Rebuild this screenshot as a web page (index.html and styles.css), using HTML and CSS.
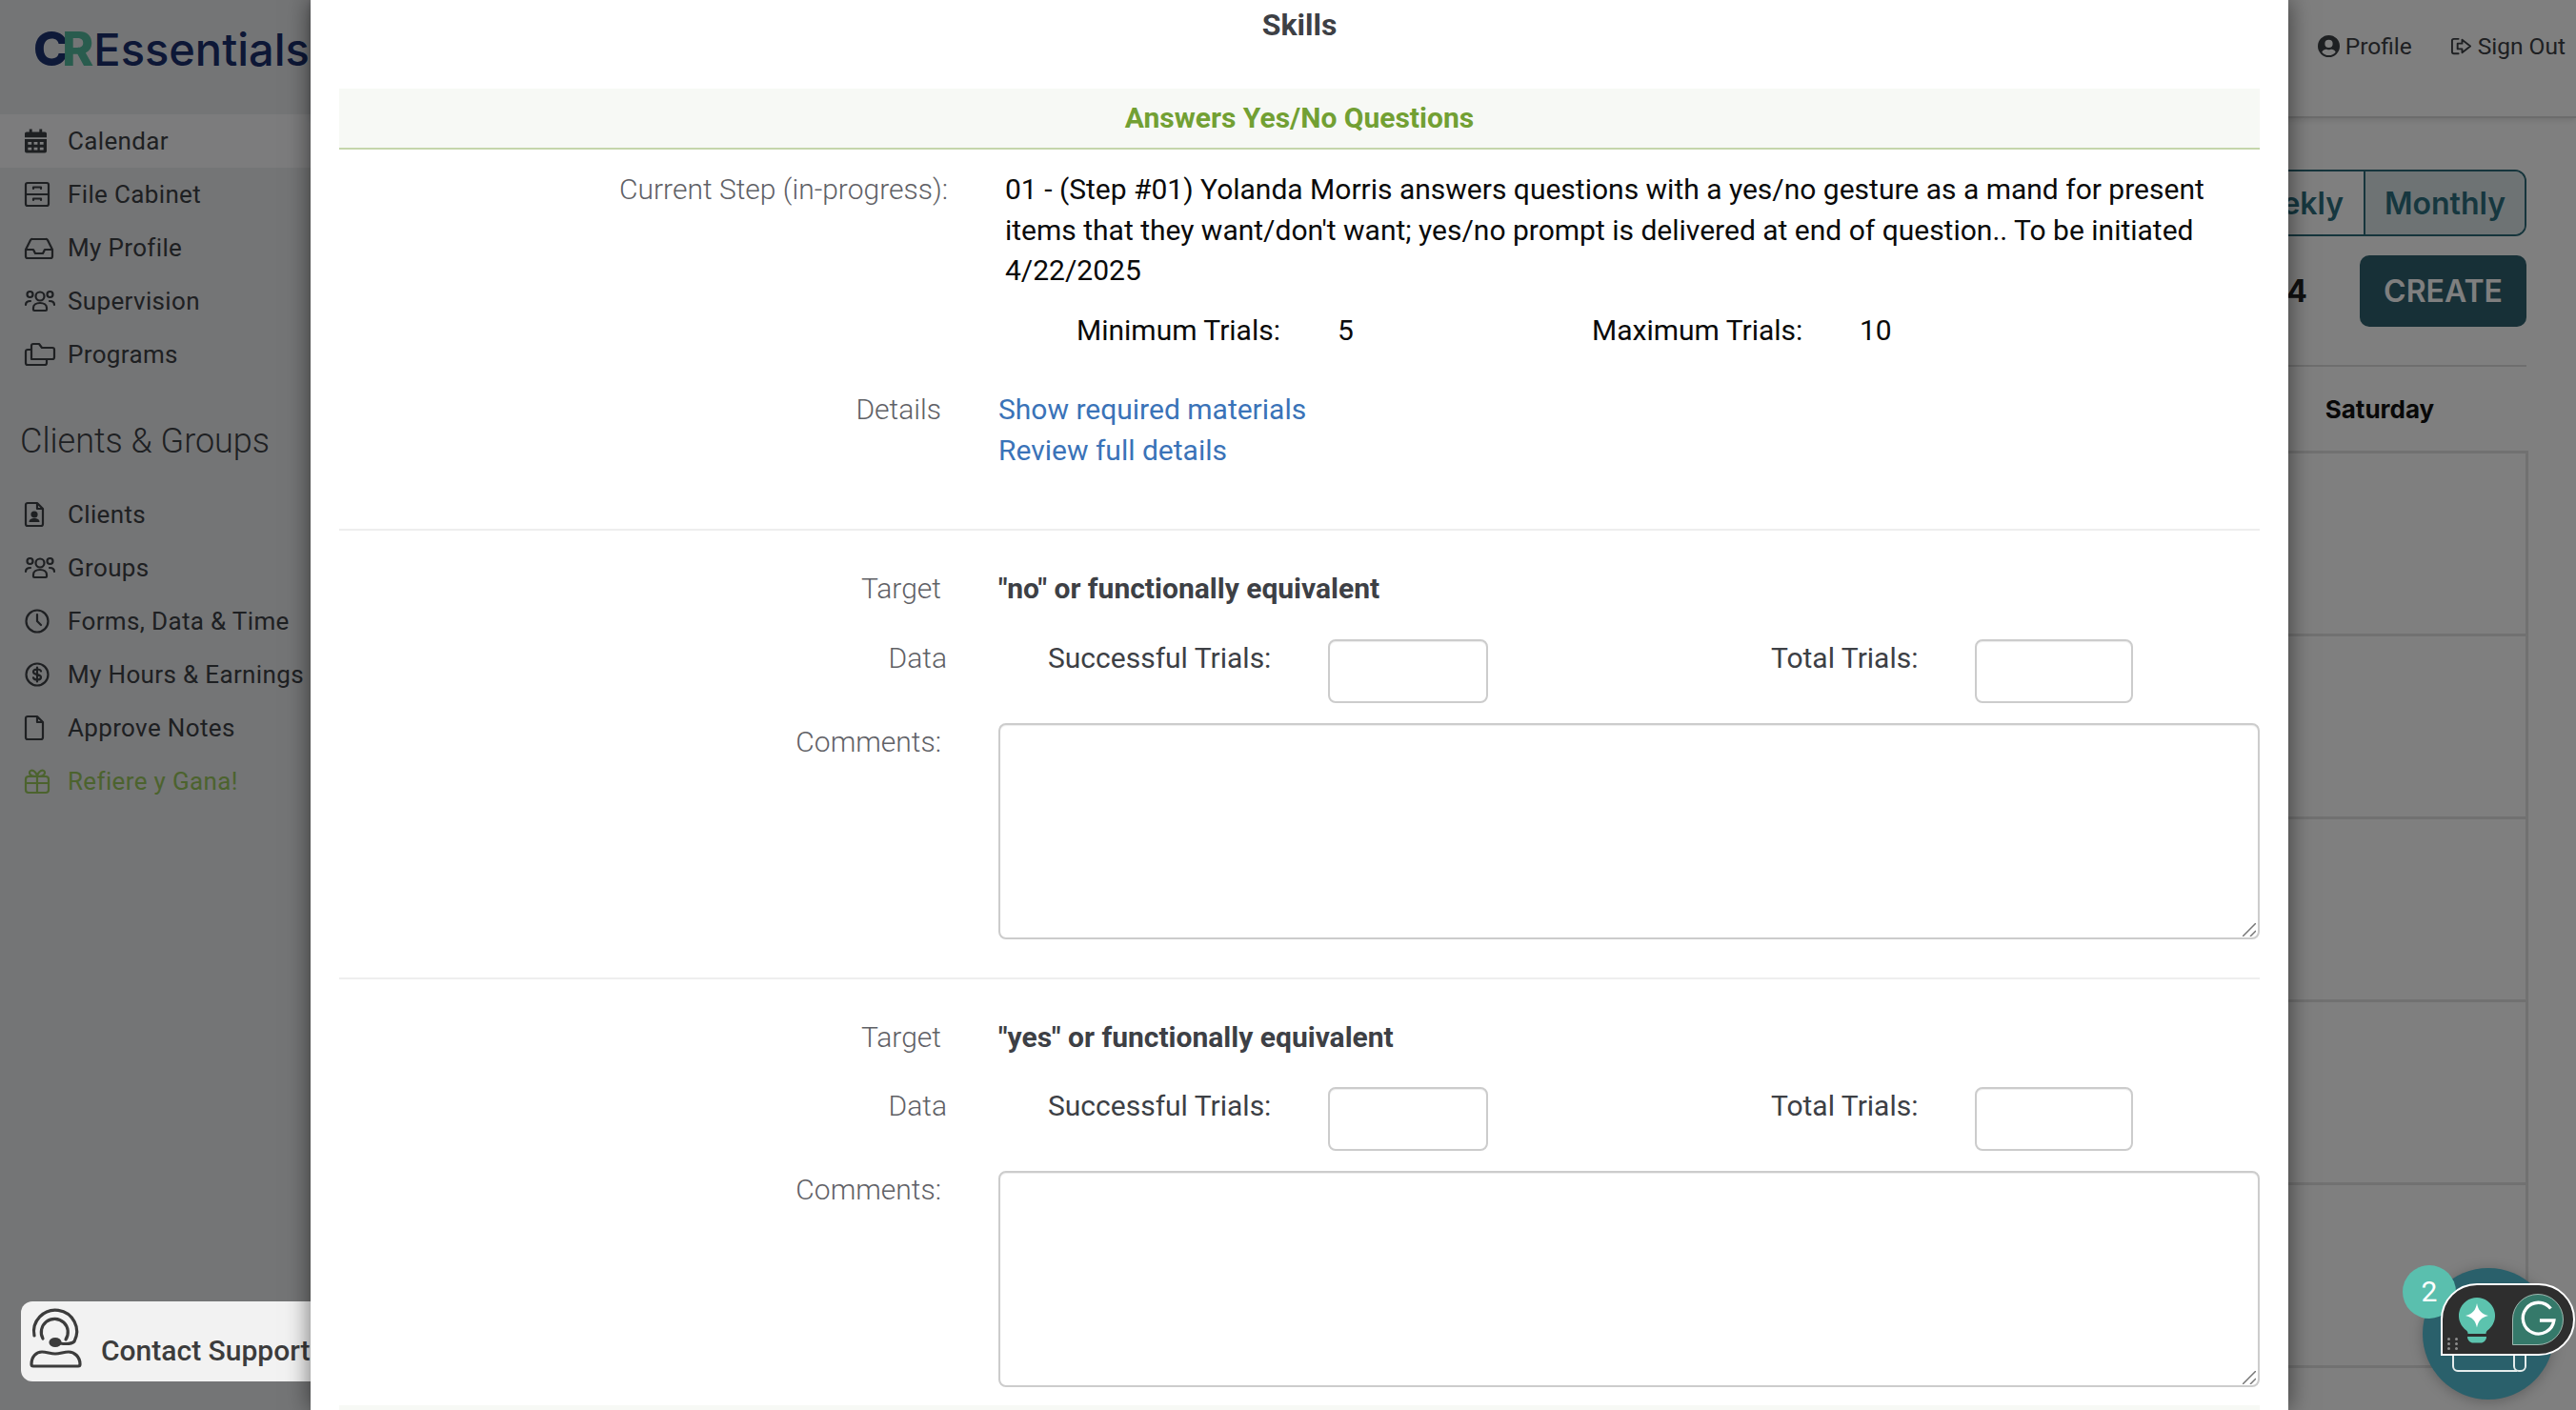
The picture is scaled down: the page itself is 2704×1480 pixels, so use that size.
FILE: index.html
```html
<!DOCTYPE html>
<html lang="en">
<head>
<meta charset="utf-8">
<title>CR Essentials - Skills</title>
<link rel="stylesheet" href="styles.css">
</head>
<body>
<div class="app">
  <aside class="sidebar">
    <div class="logo"><span class="logo-c">C</span><span class="logo-r">R</span><span class="logo-word">Essentials</span></div>
    <nav class="nav">
      <a class="nav-item active"><svg class="ico cal-ico" viewBox="0 0 24 26"><path fill="currentColor" stroke="none" d="M5 0h3v3h8V0h3v3h3a2 2 0 0 1 2 2v4H0V5a2 2 0 0 1 2-2h3zM0 11h24v13a2 2 0 0 1-2 2H2a2 2 0 0 1-2-2zm3.500 3v3h4v-3zm6.500 0v3h4v-3zm6.500 0v3h4v-3zM3.500 20v3h4v-3zm6.500 0v3h4v-3zm6.500 0v3h4v-3z"/></svg>Calendar</a>
      <a class="nav-item"><svg class="ico" viewBox="0 0 26 26"><rect x="1" y="1" width="24" height="24" rx="2"/><path d="M1 13h24M9 7V5.500h8V7M9 19v-1.500h8V19"/></svg>File Cabinet</a>
      <a class="nav-item"><svg class="ico wide" viewBox="0 0 30 26"><path d="M1 15 6 5a2 2 0 0 1 2-1h14a2 2 0 0 1 2 1l5 10v7a2 2 0 0 1-2 2H3a2 2 0 0 1-2-2zM1 15h8l2 4h8l2-4h8"/></svg>My Profile</a>
      <a class="nav-item"><svg class="ico wider" viewBox="0 0 32 26"><circle cx="16" cy="8" r="4.500"/><circle cx="5.500" cy="6" r="3"/><circle cx="26.500" cy="6" r="3"/><path d="M9 22v-2c0-3 3-5 7-5s7 2 7 5v2a1 1 0 0 1-1 1H10a1 1 0 0 1-1-1zM1 17c0-3 2-4 5-4M31 17c0-3-2-4-5-4"/></svg>Supervision</a>
      <a class="nav-item"><svg class="ico wider" viewBox="0 0 32 26"><path d="M7 18V4a2 2 0 0 1 2-2h6l3 4h11a2 2 0 0 1 2 2v8a2 2 0 0 1-2 2zM7 8H3a2 2 0 0 0-2 2v12a2 2 0 0 0 2 2h18a2 2 0 0 0 2-2v-4"/></svg>Programs</a>
    </nav>
    <h2 class="nav-heading">Clients &amp; Groups</h2>
    <nav class="nav">
      <a class="nav-item"><svg class="ico slim" viewBox="0 0 20 26"><path d="M3 1h10l6 6v16a2 2 0 0 1-2 2H3a2 2 0 0 1-2-2V3a2 2 0 0 1 2-2zM13 1v6h6"/><circle cx="10" cy="13" r="2.500" fill="currentColor"/><path fill="currentColor" stroke="none" d="M4.500 21c0-3 2.500-4 5.500-4s5.500 1 5.500 4z"/></svg>Clients</a>
      <a class="nav-item"><svg class="ico wider" viewBox="0 0 32 26"><circle cx="16" cy="8" r="4.500"/><circle cx="5.500" cy="6" r="3"/><circle cx="26.500" cy="6" r="3"/><path d="M9 22v-2c0-3 3-5 7-5s7 2 7 5v2a1 1 0 0 1-1 1H10a1 1 0 0 1-1-1zM1 17c0-3 2-4 5-4M31 17c0-3-2-4-5-4"/></svg>Groups</a>
      <a class="nav-item"><svg class="ico" viewBox="0 0 26 26"><circle cx="13" cy="13" r="11.500"/><path d="M13 6v7l4 4"/></svg>Forms, Data &amp; Time</a>
      <a class="nav-item"><svg class="ico" viewBox="0 0 26 26"><circle cx="13" cy="13" r="11.500"/><path d="M17 9.500c-.500-1.500-2-2-4-2-2.500 0-4 1-4 2.800 0 4 8 1.500 8 5.400 0 1.800-1.500 2.800-4 2.800-2 0-3.500-.700-4-2.200M13 5.500v15"/></svg>My Hours &amp; Earnings</a>
      <a class="nav-item"><svg class="ico slim" viewBox="0 0 20 26"><path d="M3 1h10l6 6v16a2 2 0 0 1-2 2H3a2 2 0 0 1-2-2V3a2 2 0 0 1 2-2zM13 1v6h6"/></svg>Approve Notes</a>
      <a class="nav-item promo"><svg class="ico" viewBox="0 0 26 26"><rect x="1" y="8" width="24" height="17" rx="3"/><path d="M1 15h24M13 8v17M13 8C9 8 5 7 5 4c0-2 2-3 4-2 2 1 4 4 4 6zm0 0c4 0 8-1 8-4 0-2-2-3-4-2-2 1-4 4-4 6z"/></svg>Refiere y Gana!</a>
    </nav>
  </aside>
  <div class="content">
    <header class="topbar">
      <a class="top-link"><svg class="top-ico" viewBox="0 0 24 24"><path fill="currentColor" fill-rule="evenodd" d="M12 0a12 12 0 1 1 0 24 12 12 0 0 1 0-24zm0 5a4.300 4.300 0 1 0 0 8.600A4.300 4.300 0 0 0 12 5zm0 17a9.700 9.700 0 0 0 7.500-3.500c-1-2-2.800-3-4.500-3-.9 0-1.700.5-3 .5s-2.100-.5-3-.5c-1.700 0-3.500 1-4.500 3A9.700 9.700 0 0 0 12 22z"/></svg>Profile</a>
      <a class="top-link"><svg class="top-ico line" viewBox="0 0 24 24"><path d="M9 4H4a2 2 0 0 0-2 2v12a2 2 0 0 0 2 2h5M13 5l9 7-9 7v-4H8V9h5z"/></svg>Sign Out</a>
    </header>
    <main class="main">
      <div class="toggle"><span class="toggle-btn">Weekly</span><span class="toggle-btn on">Monthly</span></div>
      <div class="title-row"><span class="period">2024</span><button class="create">CREATE</button></div>
      <div class="days">
        <span></span><span></span><span></span><span></span><span></span><span></span><span>Saturday</span>
      </div>
      <div class="cal">
        <div></div><div></div><div></div><div></div><div></div><div></div><div></div>
        <div></div><div></div><div></div><div></div><div></div><div></div><div></div>
        <div></div><div></div><div></div><div></div><div></div><div></div><div></div>
        <div></div><div></div><div></div><div></div><div></div><div></div><div></div>
        <div></div><div></div><div></div><div></div><div></div><div></div><div></div>
      </div>
    </main>
  </div>
</div>

<div class="backdrop"></div>

<a class="support">
  <svg class="support-ico" viewBox="0 0 54 62"><path d="M4 27A22.500 22.500 0 1 1 46 33C43 36 38 36 31 35"/><path d="M13 30A14 14 0 1 1 37 31"/><path d="M1 57C1 49 6 44 12 44c5 0 9 2 14 2s9-2 14-2c6 0 12 5 12 13a2 2 0 0 1-2 2H3a2 2 0 0 1-2-2z"/><ellipse cx="26" cy="34" rx="5" ry="3.500" fill="currentColor"/></svg>
  <span>Contact Support</span>
</a>

<section class="modal">
  <h1 class="modal-title">Skills</h1>
  <h2 class="band">Answers Yes/No Questions</h2>

  <div class="step">
    <div class="step-label">Current Step (in-progress):</div>
    <div class="step-text">01 - (Step #01) Yolanda Morris answers questions with a yes/no gesture as a mand for present items that they want/don't want; yes/no prompt is delivered at end of question.. To be initiated 4/22/2025</div>
  </div>
  <div class="limits">
    <span>Minimum Trials:</span><span>5</span><span>Maximum Trials:</span><span>10</span>
  </div>
  <div class="details">
    <div class="label">Details</div>
    <div class="links"><a>Show required materials</a><a>Review full details</a></div>
  </div>

  <div class="block">
    <div class="target"><div class="label">Target</div><div class="target-name">"no" or functionally equivalent</div></div>
    <div class="data">
      <div class="label">Data</div>
      <div class="trials">
        <label class="t-first">Successful Trials:</label><input class="num" type="text">
        <label class="t-second">Total Trials:</label><input class="num" type="text">
      </div>
    </div>
    <div class="comments"><div class="label">Comments:</div>
      <div class="ta"><textarea></textarea><svg class="grip" viewBox="0 0 14 14"><path d="M0 14 14 0M8 14l6-6"/></svg></div>
    </div>
  </div>

  <div class="block last">
    <div class="target"><div class="label">Target</div><div class="target-name">"yes" or functionally equivalent</div></div>
    <div class="data">
      <div class="label">Data</div>
      <div class="trials">
        <label class="t-first">Successful Trials:</label><input class="num" type="text">
        <label class="t-second">Total Trials:</label><input class="num" type="text">
      </div>
    </div>
    <div class="comments"><div class="label">Comments:</div>
      <div class="ta"><textarea></textarea><svg class="grip" viewBox="0 0 14 14"><path d="M0 14 14 0M8 14l6-6"/></svg></div>
    </div>
  </div>
  <div class="band band-next"></div>
</section>

<div class="widget">
  <div class="w-circle">
    <svg class="w-book" viewBox="0 0 80 30"><path d="M2 0v22a5 5 0 0 0 5 5h62M68 0h-2v22a5 5 0 0 0 5 5h2a5 5 0 0 0 5-5V0M11 6h20M37 0v8h19V0"/></svg>
  </div>
  <div class="w-badge">2</div>
  <div class="w-panel">
    <svg class="w-bulb" viewBox="0 0 38 48"><path fill="#5cc3ae" d="M19 0a19 19 0 0 1 11 34.500c-1 1-1.500 2-1.500 3.500h-19c0-1.500-.5-2.500-1.500-3.500A19 19 0 0 1 19 0z"/><path fill="#fff" d="M19 6c1.500 7.500 4.500 11 12 13-7.500 2-10.500 5-12 12.500C17.500 24 14.500 21 7 19c7.500-2 10.500-5.500 12-13z"/><path fill="#5cc3ae" d="M9 41h20c0 4-3 6.500-6 6.500h-8c-3 0-6-2.500-6-6.500z"/></svg>
    <div class="w-g"><svg viewBox="0 0 54 54"><path d="M41 15a17 17 0 1 0 3.500 13H29"/></svg></div>
    <div class="w-dots"><i></i><i></i><i></i><i></i><i></i><i></i></div>
  </div>
</div>
</body>
</html>
```

FILE: styles.css
```css
* { box-sizing: border-box; }
html, body { margin: 0; height: 100%; }
body {
  width: 2704px;
  height: 1480px;
  overflow: hidden;
  font-family: Roboto, "Noto Sans", sans-serif;
  background: #fff;
  position: relative;
}
.app { display: flex; height: 1480px; }

/* sidebar */
.sidebar { width: 326px; flex: none; background: #e9eaed; color: #3d4045; overflow: hidden; }
.logo { height: 120px; padding: 0 0 18px 35px; display: flex; align-items: center; font-family: Inter, sans-serif; font-size: 47px; white-space: nowrap; }
.logo-c { font-weight: 800; color: #1c3270; letter-spacing: -7px; font-size: 50px; }
.logo-r { font-weight: 800; color: #52b89c; font-size: 50px; }
.logo-word { font-weight: 500; color: #1a2f6c; }
.nav { display: flex; flex-direction: column; }
.nav-item { display: flex; align-items: center; height: 56px; padding-left: 26px; font-size: 26px; letter-spacing: .35px; white-space: nowrap; }
.nav-item.active { background: #f8f9fb; }
.promo { color: #98c65c; }
.ico { width: 26px; height: 26px; margin-right: 19px; flex: none; fill: none; stroke: currentColor; stroke-width: 2.200; stroke-linecap: round; stroke-linejoin: round; overflow: visible; }
.ico.cal-ico { width: 23px; margin-right: 22px; }
.ico.slim { width: 20px; margin-right: 25px; }
.ico.wide { width: 30px; margin-right: 15px; }
.ico.wider { width: 32px; margin-right: 13px; }
.nav-heading { height: 112px; margin: 0; padding: 43px 0 0 21px; font-size: 36px; line-height: 40px; font-weight: 300; white-space: nowrap; }

/* page behind */
.content { flex: 1; min-width: 0; background: #fff; }
.topbar { height: 124px; display: flex; justify-content: flex-end; gap: 40px; padding: 30px 11px 0 0; border-bottom: 2px solid #d8d8d8; box-shadow: 0 2px 6px rgba(0,0,0,.12); }
.top-link { display: flex; align-items: center; height: 36px; gap: 6px; font-size: 24.500px; color: #3d4045; }
.top-ico { width: 23px; height: 23px; }
.top-ico.line { fill: none; stroke: currentColor; stroke-width: 2; stroke-linejoin: round; stroke-linecap: round; }
.main { padding: 54px 52px 0 0; display: flex; flex-direction: column; align-items: flex-end; font-family: Inter, sans-serif; }
.toggle { display: flex; height: 70px; border: 2px solid #2c6a78; border-radius: 12px; }
.toggle-btn { display: flex; align-items: center; padding: 0 21px; font-size: 32px; font-weight: 600; color: #2c6f7e; border-left: 2px solid #2c6a78; height: 100%; }
.toggle-btn:first-child { border-left: 0; }
.toggle-btn.on { background: #dce6e9; border-radius: 0 10px 10px 0; padding: 0 20px; }
.title-row { display: flex; align-items: center; gap: 55px; margin-top: 20px; padding-bottom: 40px; border-bottom: 2px solid #dcdcdc; width: 100%; justify-content: flex-end; }
.period { font-size: 32px; font-weight: 700; color: #222; white-space: nowrap; }
.create { width: 175px; height: 75px; border: 0; border-radius: 10px; background: #2e606e; color: #fff; font: 600 32px Inter, sans-serif; padding: 0; flex: none; }
.days { display: grid; grid-template-columns: repeat(7, 312px); height: 88px; margin-right: -2px; align-items: center; text-align: center; font-size: 26px; font-weight: 700; color: #111; }
.cal { display: grid; grid-template-columns: repeat(7, 312px); grid-auto-rows: 192px; border-top: 3px solid #e2e2e2; margin-right: -2px; border-right: 3px solid #e2e2e2; }
.cal div { border-bottom: 3px solid #e2e2e2; }

/* backdrop */
.backdrop { position: absolute; inset: 0; background: rgba(0,0,0,.5); z-index: 10; }

/* contact */
.support { position: absolute; z-index: 11; left: 22px; top: 1366px; width: 320px; height: 84px; background: #f2f2f2; border-radius: 12px; display: flex; color: #3c3c3c; }
.support-ico { width: 54px; height: 62px; margin: 9px 0 0 10px; fill: none; stroke: currentColor; stroke-width: 3.200; stroke-linecap: round; stroke-linejoin: round; overflow: visible; }
.support span { margin: 30px 0 0 20px; font-size: 30px; line-height: 44px; font-weight: 500; white-space: nowrap; }

/* modal */
.modal { position: absolute; z-index: 12; left: 326px; top: 0; width: 2076px; height: 1480px; padding: 0 30px; background: #fff; overflow: hidden; box-shadow: 0 0 24px rgba(0,0,0,.55); font-size: 30px; line-height: 42.500px; color: #3d4045; }
.modal-title { margin: 0; height: 93px; padding-top: 5px; font-size: 32px; line-height: 42px; font-weight: 700; text-align: center; color: #3d4045; }
.band { margin: 0; height: 64px; background: #f7f9f5; border-bottom: 2px solid #c5d6ab; font-size: 30px; line-height: 62px; font-weight: 700; text-align: center; color: #72a033; }
.band-next { border-bottom: 0; }
.step { display: grid; grid-template-columns: 639px 1fr; column-gap: 60px; padding-top: 21px; }
.step-label { text-align: right; font-weight: 300; color: #5f6166; }
.step-text { color: #0a0a0a; padding-right: 30px; }
.limits { display: grid; grid-template-columns: 274px 267px 281px 1fr; margin: 20px 0 0 774px; color: #0a0a0a; }
.details, .target, .comments { display: grid; grid-template-columns: 632px 1fr; column-gap: 60px; }
.details { margin-top: 41px; padding-bottom: 61px; }
.label { text-align: right; font-weight: 300; color: #5f6166; }
.links { display: flex; flex-direction: column; }
.links a { color: #3a73b8; }
.block { border-top: 2px solid #eeeeee; padding-top: 40px; padding-bottom: 40px; }
.block.last { padding-bottom: 19px; }
.target-name { font-weight: 700; }
.data { display: grid; grid-template-columns: 638px 1fr; column-gap: 54px; margin-top: 30px; }
.trials { display: grid; grid-template-columns: 346px 168px 297px 214px 166px; justify-content: start; align-items: start; }
.t-first { grid-column: 1; padding-left: 52px; white-space: nowrap; }
.t-second { grid-column: 4; white-space: nowrap; }
.num { margin-top: 1px; height: 67px; width: 100%; padding: 0; border: 2px solid #ccc; border-radius: 8px; background: #fff; box-shadow: inset 0 1px 1px rgba(0,0,0,.075); outline: 0; }
.comments { margin-top: 21px; }
.comments .label { line-height: 40px; }
.ta { position: relative; }
textarea { display: block; width: 100%; height: 227px; margin: 0; padding: 0; border: 2px solid #ccc; border-radius: 8px; background: #fff; box-shadow: inset 0 1px 1px rgba(0,0,0,.075); outline: 0; resize: none; }
.grip { position: absolute; right: 4px; bottom: 3px; width: 14px; height: 14px; fill: none; stroke: #777; stroke-width: 1.500; }

/* floating widget */
.widget { position: absolute; z-index: 13; left: 2522px; top: 1328px; width: 182px; height: 152px; }
.w-circle { position: absolute; left: 21px; top: 3px; width: 138px; height: 138px; border-radius: 50%; background: #2a606b; box-shadow: 0 2px 14px rgba(0,0,0,.25); }
.w-book { position: absolute; left: 30px; top: 81px; width: 80px; height: 30px; fill: none; stroke: #e4ecec; stroke-width: 2; }
.w-badge { position: absolute; left: 0; top: 0; width: 56px; height: 56px; border-radius: 50%; background: #5abfae; color: #fff; font-size: 30px; line-height: 56px; text-align: center; }
.w-panel { position: absolute; left: 40px; top: 19px; width: 141px; height: 76px; background: #2e2e2e; border: 2px solid #fff; border-radius: 38px 38px 38px 0; }
.w-bulb { position: absolute; left: 17px; top: 13px; width: 38px; height: 48px; }
.w-g { position: absolute; left: 73px; top: 9px; width: 54px; height: 54px; background: #35796a; border: 1px solid #9fb8b0; border-radius: 50% 50% 50% 0; }
.w-g svg { display: block; width: 100%; height: 100%; fill: none; stroke: #fff; stroke-width: 3.500; }
.w-dots { position: absolute; left: 5px; top: 55px; display: grid; grid-template-columns: 3px 3px; gap: 2px 5px; }
.w-dots i { width: 3px; height: 3px; border-radius: 50%; background: #8d8d8d; }
```
